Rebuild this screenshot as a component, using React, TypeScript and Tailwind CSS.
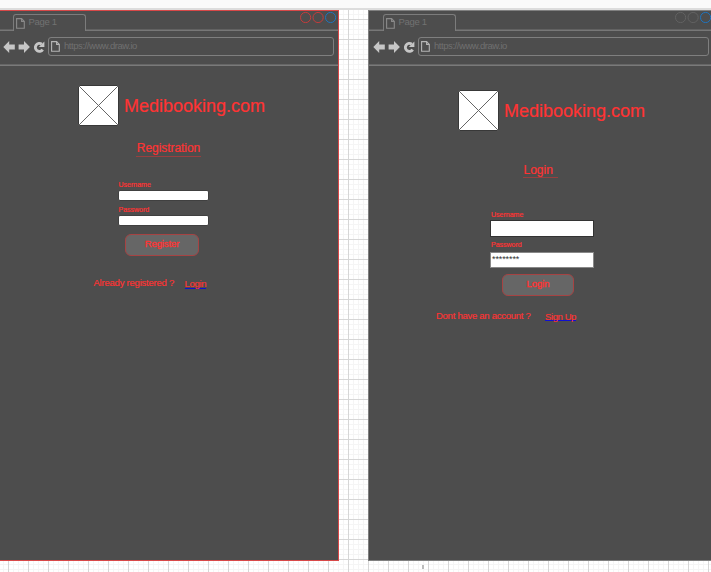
import React from "react";

function PageIcon({ className = "", stroke = "#8a8a8a" }: { className?: string; stroke?: string }) {
  return (
    <svg width="9" height="11" viewBox="0 0 9 11" fill="none" stroke={stroke} strokeWidth="1.1" className={`shrink-0 ${className}`}>
      <path d="M0.6 0.6H5.6L8.3 3.4V10.2H0.6Z" />
      <path d="M5.6 0.6V3.4H8.3" />
    </svg>
  );
}

function NavIcons() {
  return (
    <svg width="42" height="14" viewBox="0 0 42 14" className="shrink-0">
      <path d="M0.3 7L6.2 1V4.4H11.8V9.6H6.2V13Z" fill="#c6c6c6" />
      <path d="M26.9 7L21 1V4.4H15.6V9.6H21V13Z" fill="#c6c6c6" />
      <path d="M39.7 9.6A4 4 0 1 1 38.8 4.2" fill="none" stroke="#c6c6c6" strokeWidth="2.9" />
      <path d="M41.4 1.6V7H35.8Z" fill="#c6c6c6" />
    </svg>
  );
}

function Dots({ colors, className }: { colors: string[]; className: string }) {
  return (
    <svg width="37" height="12" viewBox="0 0 37 12" fill="none" className={`shrink-0 ${className}`}>
      {colors.map((c, i) => (
        <circle key={i} cx={5.6 + i * 12.5} cy="6.5" r="5.1" stroke={c} strokeWidth="1" />
      ))}
    </svg>
  );
}

function Chrome({ indent, dots, dotsInset, barWidth }: { indent: string; dots: string[]; dotsInset: string; barWidth: string }) {
  return (
    <header className="flex h-[56px] flex-col border-b border-[#7a7a7a] shadow-[inset_0_-1px_0_#666666]">
      <div className="flex h-[21px] shrink-0">
        <div className={`${indent} shrink-0 border-b border-[#777777] shadow-[inset_0_-1px_0_#626262]`} />
        <div className="mt-[4px] flex w-[73px] shrink-0 items-start rounded-t-[3px] border-x border-t border-[#7c7c7c] pl-[2px]">
          <PageIcon className="mt-[3px]" />
          <span className="ml-[3.5px] mt-[1px] text-[9.5px] leading-[11px] tracking-[-0.3px] text-[#727272]">Page 1</span>
        </div>
        <div className={`flex flex-1 justify-end border-b border-[#777777] shadow-[inset_0_-1px_0_#626262] ${dotsInset}`}>
          <Dots colors={dots} className="mt-[1px]" />
        </div>
      </div>
      <div className="flex pt-[6px]">
        <div className={`${indent} -mr-[10px] shrink-0`} />
        <div className="mt-[3px]">
          <NavIcons />
        </div>
        <div className={`ml-[3px] flex h-[19px] shrink-0 items-center rounded-[3px] border border-[#7f7f7f] pl-[2px] ${barWidth}`}>
          <PageIcon stroke="#b4b4b4" />
          <span className="mb-[2px] ml-[4px] text-[9.5px] leading-[13px] tracking-[-0.44px] text-[#707070]">https://www.draw.io</span>
        </div>
      </div>
    </header>
  );
}

function Brand({ className }: { className: string }) {
  return (
    <div className={`flex h-[41px] items-center ${className}`}>
      <svg width="41" height="41" viewBox="0 0 41 41" className="shrink-0">
        <rect x="0.5" y="0.5" width="40" height="40" rx="1" fill="#fff" stroke="#383838" />
        <path d="M1 1L40 40M40 1L1 40" stroke="#666" strokeWidth="1" />
      </svg>
      <h1 className="ml-[5px] text-[18px] leading-[20px] text-[#ff3333] [-webkit-text-stroke:0.2px_#ff3333]">Medibooking.com</h1>
    </div>
  );
}

function Label({ children, className }: { children: React.ReactNode; className: string }) {
  return (
    <div className={`h-[9px] text-[7px] leading-[9px] text-[#ff3333] [-webkit-text-stroke:0.2px_#ff3333] ${className}`}>{children}</div>
  );
}

export default function App() {
  return (
    <div className="h-[572px] w-[711px] overflow-hidden whitespace-nowrap bg-white bg-[linear-gradient(to_right,#d6d6d6_1px,transparent_1px),linear-gradient(to_bottom,#d6d6d6_1px,transparent_1px),linear-gradient(to_right,#f5f5f5_1px,transparent_1px),linear-gradient(to_bottom,#f5f5f5_1px,transparent_1px)] bg-[size:20px_20px,20px_20px,5px_5px,5px_5px] bg-[position:8px_19px,8px_19px,3px_4px,3px_4px] font-['Liberation_Sans',Arial,sans-serif]">
      <div className="h-[10px] border-b-2 border-[#dddddd] bg-[#fafafa]" />
      <main className="flex h-[551px]">
        <section className="w-[339px] shrink-0 border-b border-r border-t border-[#d84848] bg-[#4d4d4d]">
          <div className="-mt-px">
            <Chrome indent="w-[13px]" dots={["#c43c3c", "#c43c3c", "#2074bd"]} dotsInset="pr-[1px]" barWidth="w-[286px]" />
          </div>
          <Brand className="mt-[19px] pl-[78px]" />
          <div className="ml-[136px] mt-[14px] h-[17px] w-[65px] border-b border-[#983f3f] text-center text-[12px] leading-[17px] tracking-[-0.05px] text-[#ff3333] [-webkit-text-stroke:0.2px_#ff3333]">
            Registration
          </div>
          <Label className="mt-[23px] pl-[118.5px]">Username</Label>
          <div className="ml-[118px] mt-px h-[11px] w-[91px] rounded-[2px] border border-[#404040] bg-white" />
          <Label className="mt-[4px] pl-[118.5px]">Password</Label>
          <div className="ml-[118px] mt-px h-[11px] w-[91px] rounded-[2px] border border-[#404040] bg-white" />
          <button className="ml-[125px] mt-[8px] block h-[22px] w-[74px] rounded-[6px] border border-[#a64343] bg-[#666666] pb-[3px] text-center text-[9.5px] leading-[17px] tracking-[-0.1px] text-[#ff3333] [-webkit-text-stroke:0.3px_#ff3333]">
            Register
          </button>
          <div className="mt-[20px] flex pl-[93.5px] text-[9.5px] leading-[13px] text-[#ff3333] [-webkit-text-stroke:0.15px_#ff3333]">
            <span className="w-[91px] tracking-[-0.22px]">Already registered ?</span>
            <a className="mt-[1px] h-[12px] border-b border-[#1010d0] tracking-[-0.3px]">Login</a>
          </div>
        </section>
        <section className="ml-[29px] w-[351px] shrink-0 border-b border-l border-t border-[#808080] bg-[#4d4d4d]">
          <div className="-mt-px">
            <Chrome indent="w-[14px]" dots={["#626262", "#626262", "#2074bd"]} dotsInset="pr-[7px]" barWidth="w-[291px]" />
          </div>
          <Brand className="mt-[24px] pl-[89px]" />
          <div className="ml-[154px] mt-[31px] h-[16px] w-[35px] border-b border-[#983f3f] pl-[0.5px] text-[12px] leading-[17px] text-[#ff3333] [-webkit-text-stroke:0.2px_#ff3333]">
            Login
          </div>
          <Label className="mt-[32px] pl-[122px]">Username</Label>
          <div className="ml-[121px] mt-px h-[17px] w-[104px] border border-[#333333] bg-white" />
          <Label className="mt-[3px] pl-[122px]">Password</Label>
          <div className="ml-[121px] mt-[3px] h-[16px] w-[104px] border border-[#888888] bg-white pl-[1px] text-[9px] leading-[13px] tracking-[-0.1px] text-[#333333]">
            ********
          </div>
          <button className="ml-[133px] mt-[6px] block h-[22px] w-[72px] rounded-[6px] border border-[#a64343] bg-[#666666] pb-[3px] text-center text-[9.5px] leading-[17px] text-[#ff3333] [-webkit-text-stroke:0.3px_#ff3333]">
            Login
          </button>
          <div className="mt-[13px] flex pl-[67px] text-[9.5px] leading-[13px] text-[#ff3333] [-webkit-text-stroke:0.15px_#ff3333]">
            <span className="w-[109px] tracking-[-0.26px]">Dont have an account ?</span>
            <a className="mt-[1px] h-[11px] border-b border-[#1010d0] tracking-[-0.4px]">Sign Up</a>
          </div>
        </section>
      </main>
      <div className="ml-[422px] mt-[4px] h-[4px] w-[2px] bg-[#bbbbbb]" />
    </div>
  );
}
